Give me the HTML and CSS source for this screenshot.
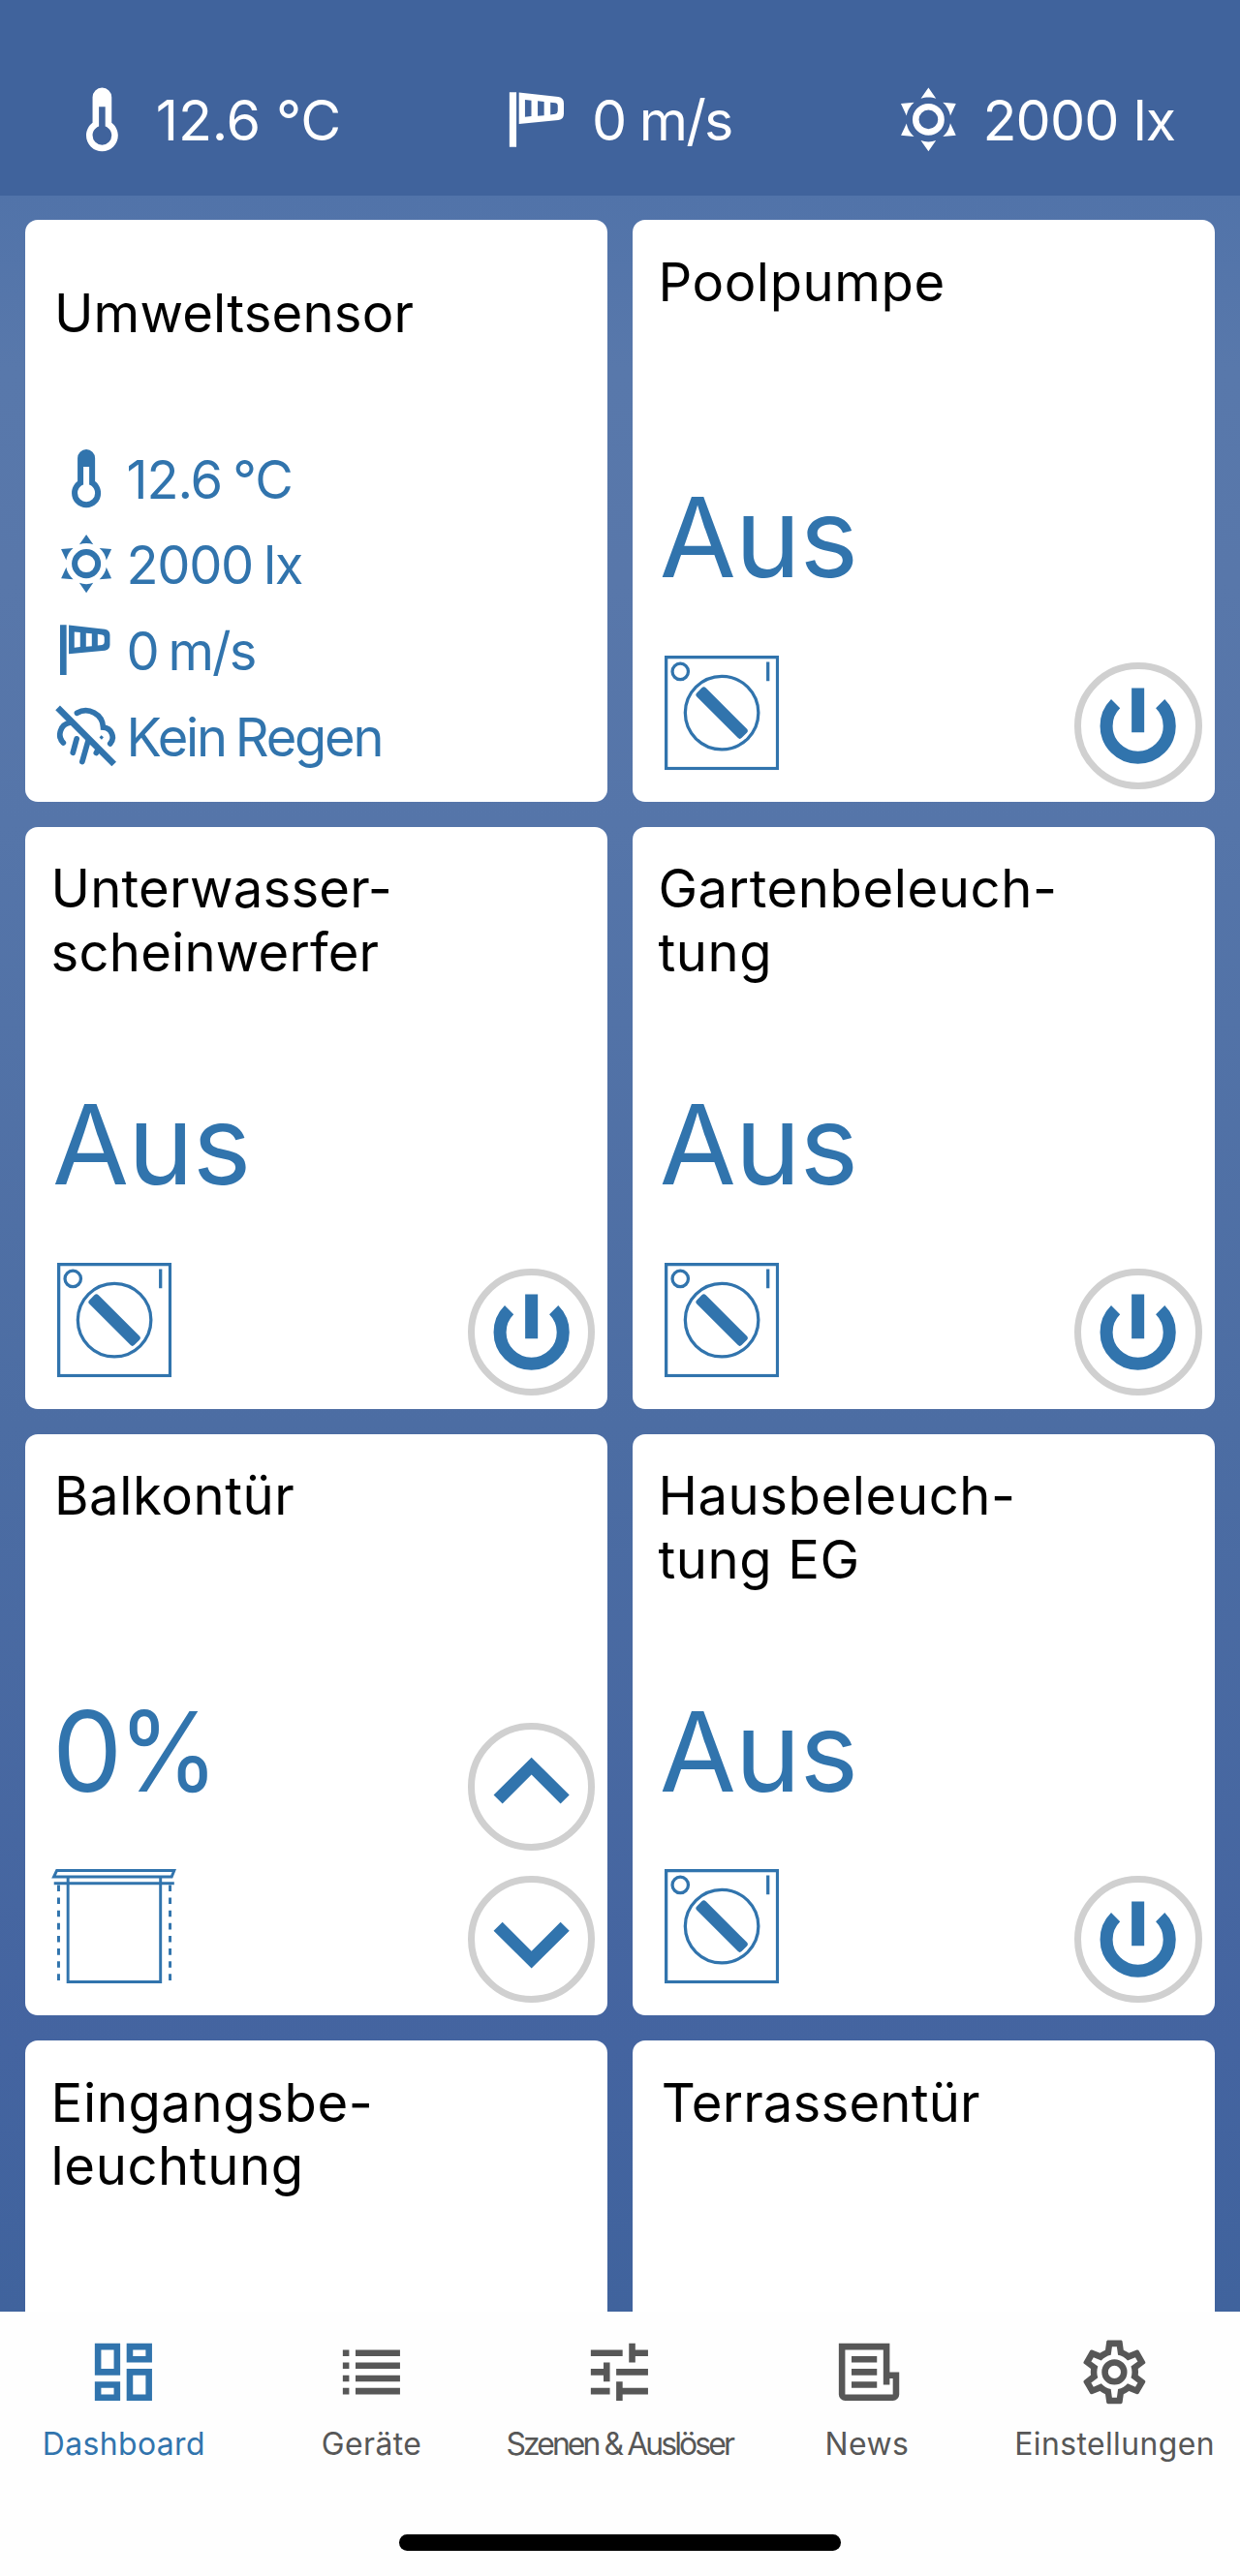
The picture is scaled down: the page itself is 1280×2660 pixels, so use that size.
FILE: index.html
```html
<!DOCTYPE html>
<html lang="de">
<head>
<meta charset="utf-8">
<title>Dashboard</title>
<link rel="stylesheet" href="styles.css">
</head>
<body>
<svg class="sprite" aria-hidden="true">
  <symbol id="thermometer" viewBox="0 0 24 24">
    <path d="M17 17A5 5 0 1 1 7 17C7 15.36 7.79 13.91 9 13V5A3 3 0 0 1 15 5V13C16.21 13.91 17 15.36 17 17M11 8V14.17C9.83 14.58 9 15.69 9 17A3 3 0 0 0 15 17C15 15.69 14.17 14.58 13 14.17V8H11Z" fill-rule="evenodd"/>
  </symbol>
  <symbol id="sun" viewBox="0 0 24 24">
    <path d="M12,7A5,5 0 0,1 17,12A5,5 0 0,1 12,17A5,5 0 0,1 7,12A5,5 0 0,1 12,7M12,9A3,3 0 0,0 9,12A3,3 0 0,0 12,15A3,3 0 0,0 15,12A3,3 0 0,0 12,9M12,2L14.39,5.42C13.65,5.15 12.84,5 12,5C11.16,5 10.35,5.15 9.61,5.42L12,2M3.34,7L7.5,6.65C6.9,7.16 6.36,7.78 5.94,8.5C5.5,9.24 5.25,10 5.11,10.79L3.34,7M3.36,17L5.12,13.23C5.26,14 5.53,14.78 5.95,15.5C6.37,16.24 6.91,16.86 7.5,17.37L3.36,17M20.65,7L18.88,10.79C18.74,10 18.47,9.23 18.05,8.5C17.63,7.78 17.1,7.15 16.5,6.64L20.65,7M20.64,17L16.5,17.36C17.09,16.85 17.62,16.22 18.04,15.5C18.46,14.77 18.73,14 18.87,13.21L20.64,17M12,22L9.59,18.56C10.33,18.83 11.14,19 12,19C12.82,19 13.63,18.83 14.37,18.56L12,22Z"/>
  </symbol>
  <symbol id="windsock" viewBox="0 0 24 24">
    <path fill-rule="evenodd" d="M3 3.4H5.2V20.6H3ZM6 3.5L18.4 4.9Q20.1 5.2 20.1 6.9V10.2Q20.1 11.9 18.4 12.2L6 13.4ZM7.9 5.8V11.2L9.9 11V6ZM11.9 6.2V10.9L13.9 10.7V6.4ZM15.9 6.6V10.5L17.4 10.3Q18.2 10.1 18.2 9.3V7.7Q18.2 6.9 17.4 6.8Z"/>
  </symbol>
  <symbol id="no-rain" viewBox="0 0 24 24">
    <g fill="none" stroke="currentColor" stroke-width="1.9">
      <path d="M2.2 2.3L21.5 21.6" stroke-width="2.2"/>
      <g stroke-linecap="round">
        <path d="M6.4 7.4A4.1 4.1 0 0 0 4.1 14.3"/>
        <path d="M8.8 4.1A6 6 0 0 1 17.8 9A3.4 3.4 0 0 1 20.2 14.6"/>
        <path d="M8.7 12.9L7.4 17.7M12.7 13.4L10.6 20.8M15.7 17.2L15.4 17.8"/>
      </g>
      <path d="M16.8 12.1L17.6 12.8" stroke-width="1"/>
    </g>
  </symbol>
  <symbol id="switch" viewBox="0 0 36 36">
    <g fill="none" stroke="currentColor" stroke-width="1">
      <rect x=".5" y=".5" width="35" height="35"/>
      <circle cx="4.95" cy="5" r="2.5"/>
      <circle cx="18" cy="18" r="11.5"/>
      <path d="M32.5 2V8"/>
    </g>
    <rect x="8" y="16" width="20" height="4" rx=".9" transform="rotate(45 18 18)"/>
  </symbol>
  <symbol id="power" viewBox="2 2 36 36">
    <path d="M12.93 12.93A10 10 0 1 0 27.07 12.93M20 8V22" fill="none" stroke="currentColor" stroke-width="4"/>
  </symbol>
  <symbol id="up" viewBox="2 2 36 36">
    <path d="M20 10.8L32 22.7L29.2 25.5L20 16.3L10.8 25.5L8 22.7Z"/>
  </symbol>
  <symbol id="down" viewBox="2 2 36 36">
    <path d="M20 29.2L32 17.3L29.2 14.5L20 23.7L10.8 14.5L8 17.3Z"/>
  </symbol>
  <symbol id="tab-dashboard" viewBox="0 0 24 24">
    <path d="M19 5v2h-4V5h4M9 5v6H5V5h4m10 8v6h-4v-6h4M9 17v2H5v-2h4M21 3h-8v6h8V3zM11 3H3v10h8V3zm10 8h-8v10h8V11zm-10 4H3v6h8v-6z"/>
  </symbol>
  <symbol id="tab-list" viewBox="0 0 24 24">
    <path d="M3 5h2v2H3zM7 5h14v2H7zM3 9h2v2H3zM7 9h14v2H7zM3 13h2v2H3zM7 13h14v2H7zM3 17h2v2H3zM7 17h14v2H7z"/>
  </symbol>
  <symbol id="tab-tune" viewBox="0 0 24 24">
    <path d="M3 17v2h6v-2H3zM3 5v2h10V5H3zm10 16v-2h8v-2h-8v-2h-2v6h2zM7 9v2H3v2h4v2h2V9H7zm14 4v-2H11v2h10zm-6-4h2V7h4V5h-4V3h-2v6z"/>
  </symbol>
  <symbol id="tab-news" viewBox="0 0 24 24">
    <path fill-rule="evenodd" d="M3 3H19V12H22V19A2 2 0 0 1 20 21H5A2 2 0 0 1 3 19ZM5 5V19H20V14H19V16H17V5ZM7 7H15V9H7ZM7 11H15V13H7ZM7 15H15V17H7Z"/>
  </symbol>
  <symbol id="tab-cog" viewBox="0 0 24 24">
    <path d="M12,8A4,4 0 0,1 16,12A4,4 0 0,1 12,16A4,4 0 0,1 8,12A4,4 0 0,1 12,8M12,10A2,2 0 0,0 10,12A2,2 0 0,0 12,14A2,2 0 0,0 14,12A2,2 0 0,0 12,10M10,22C9.75,22 9.54,21.82 9.5,21.58L9.13,18.93C8.5,18.68 7.96,18.34 7.44,17.94L4.95,18.95C4.73,19.03 4.46,18.95 4.34,18.73L2.34,15.27C2.21,15.05 2.27,14.78 2.46,14.63L4.57,12.97L4.5,12L4.57,11L2.46,9.37C2.27,9.22 2.21,8.95 2.34,8.73L4.34,5.27C4.46,5.05 4.73,4.96 4.95,5.05L7.44,6.05C7.96,5.66 8.5,5.32 9.13,5.07L9.5,2.42C9.54,2.18 9.75,2 10,2H14C14.25,2 14.46,2.18 14.5,2.42L14.87,5.07C15.5,5.32 16.04,5.66 16.56,6.05L19.05,5.05C19.27,4.96 19.54,5.05 19.66,5.27L21.66,8.73C21.79,8.95 21.73,9.22 21.54,9.37L19.43,11L19.5,12L19.43,13L21.54,14.63C21.73,14.78 21.79,15.05 21.66,15.27L19.66,18.73C19.54,18.95 19.27,19.04 19.05,18.95L16.56,17.95C16.04,18.34 15.5,18.68 14.87,18.93L14.5,21.58C14.46,21.82 14.25,22 14,22H10M11.25,4L10.88,6.61C9.68,6.86 8.62,7.5 7.85,8.39L5.44,7.35L4.69,8.65L6.8,10.2C6.4,11.37 6.4,12.64 6.8,13.8L4.68,15.36L5.43,16.66L7.86,15.62C8.63,16.5 9.68,17.14 10.87,17.38L11.24,20H12.76L13.13,17.39C14.32,17.14 15.37,16.5 16.14,15.62L18.57,16.66L19.32,15.36L17.2,13.81C17.6,12.64 17.6,11.37 17.2,10.2L19.31,8.65L18.56,7.35L16.15,8.39C15.38,7.5 14.32,6.86 13.12,6.62L12.75,4H11.25Z"/>
  </symbol>
</svg>

<div class="screen">
  <header class="weather">
    <div class="weather-item"><svg class="icon"><use href="#thermometer"/></svg><span class="weather-temp">12.6 °C</span></div>
    <div class="weather-item"><svg class="icon"><use href="#windsock"/></svg><span class="weather-wind">0 m/s</span></div>
    <div class="weather-item"><svg class="icon"><use href="#sun"/></svg><span class="weather-light">2000 lx</span></div>
  </header>

  <main class="cards">
    <section class="card card-sensor">
      <h2 class="title title-indent title-tight">Umweltsensor</h2>
      <ul class="readings">
        <li class="reading reading-temp"><svg class="icon"><use href="#thermometer"/></svg><span>12.6 °C</span></li>
        <li class="reading reading-light"><svg class="icon"><use href="#sun"/></svg><span>2000 lx</span></li>
        <li class="reading reading-wind"><svg class="icon"><use href="#windsock"/></svg><span>0 m/s</span></li>
        <li class="reading reading-rain"><svg class="icon"><use href="#no-rain"/></svg><span>Kein Regen</span></li>
      </ul>
    </section>

    <section class="card">
      <h2 class="title">Poolpumpe</h2>
      <div class="body">
        <div class="state"><div class="value">Aus</div><svg class="device"><use href="#switch"/></svg></div>
        <div class="controls"><button class="round"><svg><use href="#power"/></svg></button></div>
      </div>
    </section>

    <section class="card">
      <h2 class="title title-tight">Unterwasser-<br>scheinwerfer</h2>
      <div class="body">
        <div class="state"><div class="value">Aus</div><svg class="device"><use href="#switch"/></svg></div>
        <div class="controls"><button class="round"><svg><use href="#power"/></svg></button></div>
      </div>
    </section>

    <section class="card">
      <h2 class="title">Gartenbeleuch-<br>tung</h2>
      <div class="body">
        <div class="state"><div class="value">Aus</div><svg class="device"><use href="#switch"/></svg></div>
        <div class="controls"><button class="round"><svg><use href="#power"/></svg></button></div>
      </div>
    </section>

    <section class="card">
      <h2 class="title title-indent">Balkontür</h2>
      <div class="body">
        <div class="state">
          <div class="value value-percent">0<span class="percent">%</span></div>
          <svg class="device device-shutter" viewBox="0 0 36 36">
            <path d="M-.1 .45H36.8L36 2.45H-1.05Z"/>
            <path d="M-1 4.5H36.8M3.4 2.5V35.5H32.5V2.5"/>
            <path d="M.45 5V35M35.5 5V35" stroke-dasharray="2 2"/>
          </svg>
        </div>
        <div class="controls">
          <button class="round"><svg><use href="#up"/></svg></button>
          <button class="round"><svg><use href="#down"/></svg></button>
        </div>
      </div>
    </section>

    <section class="card">
      <h2 class="title">Hausbeleuch-<br>tung EG</h2>
      <div class="body">
        <div class="state"><div class="value">Aus</div><svg class="device"><use href="#switch"/></svg></div>
        <div class="controls"><button class="round"><svg><use href="#power"/></svg></button></div>
      </div>
    </section>

    <section class="card">
      <h2 class="title">Eingangsbe-<br>leuchtung</h2>
    </section>

    <section class="card">
      <h2 class="title title-indent title-tight">Terrassentür</h2>
    </section>
  </main>

  <nav class="tabbar">
    <div class="tabs">
      <a class="tab tab-active"><svg class="icon"><use href="#tab-dashboard"/></svg><span>Dashboard</span></a>
      <a class="tab"><svg class="icon"><use href="#tab-list"/></svg><span>Geräte</span></a>
      <a class="tab tab-condensed"><svg class="icon"><use href="#tab-tune"/></svg><span>Szenen &amp; Auslöser</span></a>
      <a class="tab"><svg class="icon"><use href="#tab-news"/></svg><span>News</span></a>
      <a class="tab"><svg class="icon"><use href="#tab-cog"/></svg><span>Einstellungen</span></a>
    </div>
    <div class="home-indicator"></div>
  </nav>
</div>
</body>
</html>
```
FILE: styles.css
```css
* { box-sizing: border-box; }

body {
  margin: 0;
  font-family: Inter, "Liberation Sans", sans-serif;
}

svg {
  display: block;
  fill: currentColor;
}

.sprite {
  position: absolute;
  width: 0;
  height: 0;
}

.screen {
  display: flex;
  flex-direction: column;
  width: 1280px;
  height: 2660px;
  overflow: hidden;
  background: linear-gradient(#5173a9 202px, #5878ab 380px, #5877aa 600px, #5575a9 850px, #4c6da3 1470px, #4464a0 2110px, #40639d 2387px);
}

/* Weather strip */
.weather {
  flex: none;
  display: flex;
  justify-content: space-between;
  align-items: center;
  height: 202px;
  padding: 45px 66.8px 0 65.6px;
  background: #40639c;
  color: #fff;
  font-size: 57.4px;
  line-height: 66px;
}

.weather-item {
  display: flex;
  align-items: center;
  gap: 16.4px;
  white-space: nowrap;
}

.weather-item span { padding-top: 2px; }

.icon {
  flex: none;
  width: 78.8px;
  height: 78.8px;
}

.weather-temp { letter-spacing: -0.2px; }
.weather-wind { letter-spacing: -1.8px; }
.weather-light { letter-spacing: -0.9px; }

/* Device cards */
.cards {
  flex: 1;
  min-height: 0;
  display: grid;
  grid-template-columns: 1fr 1fr;
  grid-auto-rows: 600.5px;
  gap: 26.2px;
  padding: 25.4px 26.3px 0;
  overflow: hidden;
}

.card {
  display: flex;
  flex-direction: column;
  justify-content: space-between;
  padding: 31.3px 13.1px 13.1px 26.3px;
  border-radius: 13px;
  background: #fff;
  color: #3174ad;
}

.title {
  margin: 0;
  color: #000;
  font-size: 54.4px;
  font-weight: 400;
  line-height: 65.6px;
  letter-spacing: 0.6px;
}

.title-indent { padding-left: 3.3px; }
.title-tight { letter-spacing: 0.2px; }

.body {
  display: flex;
  justify-content: space-between;
  align-items: flex-end;
}

.state {
  display: flex;
  flex-direction: column;
  gap: 56.2px;
  padding-bottom: 19.7px;
}

.value {
  padding-left: 1.4px;
  font-size: 114.7px;
  line-height: 131.3px;
  letter-spacing: -1.1px;
}

.value-percent { letter-spacing: -4px; }

.percent {
  display: inline-block;
  transform: scaleX(0.92);
  transform-origin: left;
}

.device {
  width: 118.2px;
  height: 118.2px;
  margin-left: 6.5px;
  overflow: visible;
}

.device-shutter {
  fill: none;
  stroke: currentColor;
  stroke-width: 0.9;
}

.controls {
  display: flex;
  flex-direction: column;
  gap: 26.3px;
}

.round {
  width: 131.3px;
  height: 131.3px;
  padding: 0;
  border: 7px solid #d0d0d0;
  border-radius: 50%;
  background: #fff;
  color: inherit;
}

.round svg {
  width: 100%;
  height: 117.3px;
}

/* Environment sensor */
.card-sensor {
  padding-top: 63.8px;
  padding-bottom: 24px;
}

.readings {
  margin: 0;
  padding: 0;
  list-style: none;
  font-size: 54.2px;
  word-spacing: -3px;
}

.reading {
  display: flex;
  align-items: center;
  gap: 5.8px;
  height: 88.6px;
}

.reading .icon {
  width: 72.2px;
  height: 72.2px;
}

.reading span { padding-top: 2px; }

.reading-temp { letter-spacing: -1.1px; }
.reading-light { letter-spacing: -1.3px; }
.reading-wind { letter-spacing: -1.8px; }
.reading-rain { letter-spacing: -2.2px; }

/* Bottom navigation */
.tabbar {
  flex: none;
  display: flex;
  flex-direction: column;
  justify-content: space-between;
  height: 272.7px;
  padding: 23px 0 26.3px;
  background: #fefefe;
  color: #575757;
}

.tabs {
  display: grid;
  grid-template-columns: repeat(5, 255.7px);
}

.tab {
  display: flex;
  flex-direction: column;
  align-items: center;
  gap: 14.5px;
  font-size: 31.9px;
  line-height: 40px;
  letter-spacing: 0.4px;
  white-space: nowrap;
}

.tab-active { color: #3174ad; }
.tab-condensed { letter-spacing: -2.9px; }

.home-indicator {
  align-self: center;
  width: 456px;
  height: 16.4px;
  border-radius: 8.2px;
  background: #000;
}
```
